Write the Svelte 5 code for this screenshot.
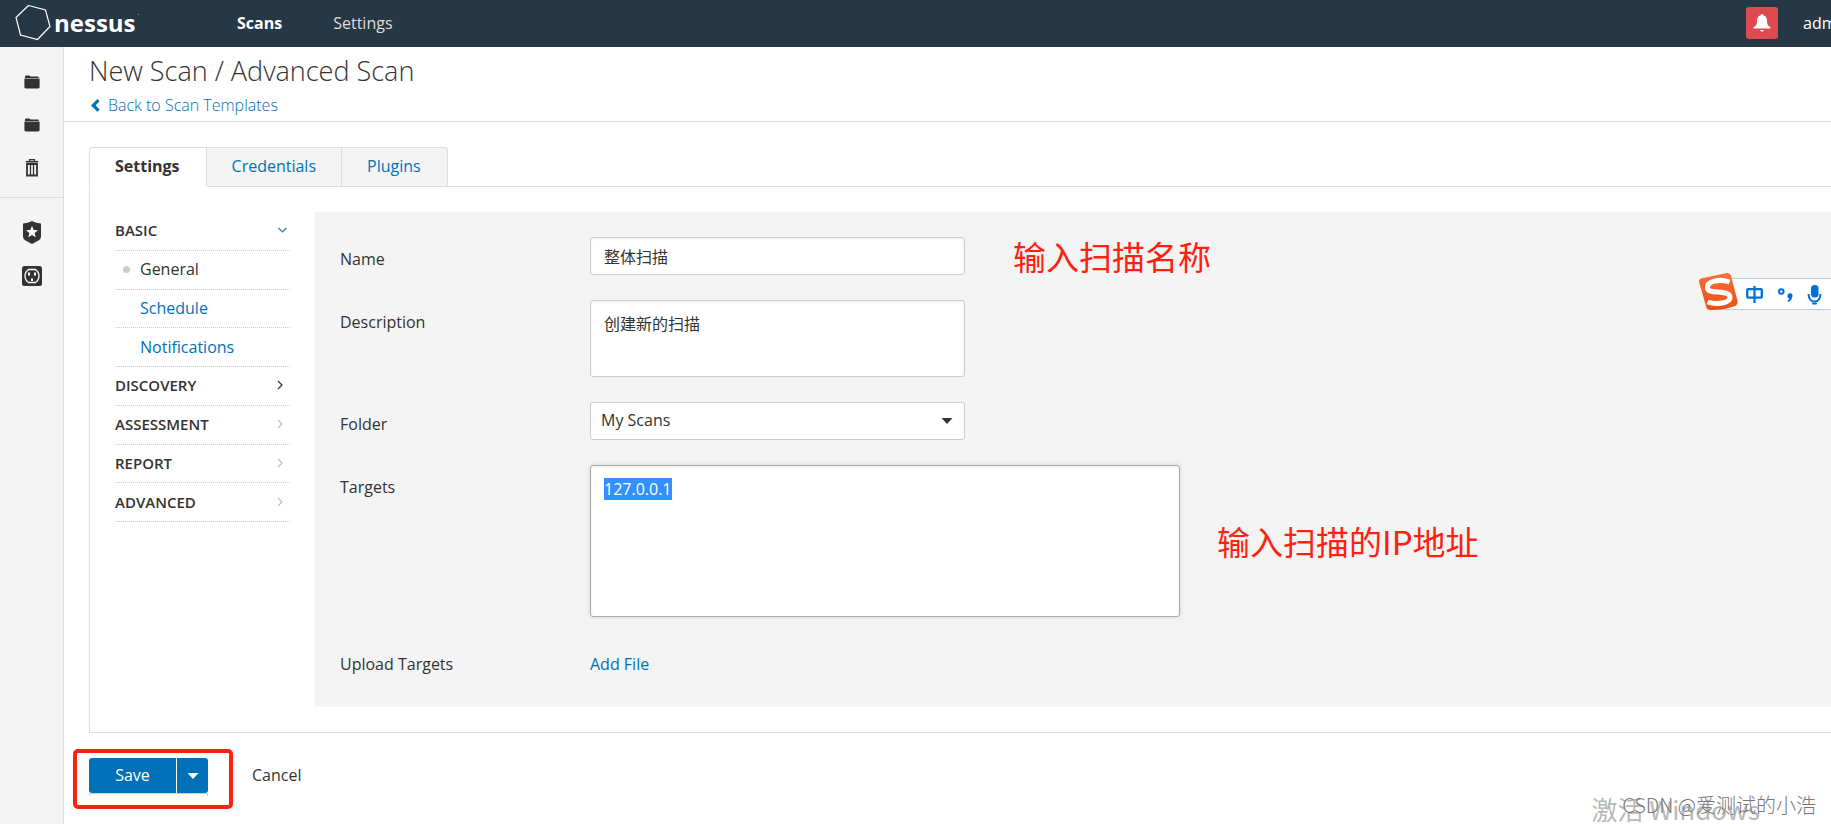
<script>
  import { onMount } from 'svelte';

  let name = $state('整体扫描');
  let description = $state('创建新的扫描');
  let folder = $state('My Scans');
  let targets = $state('127.0.0.1');
  let targetsBox;

  const tabs = ['Settings', 'Credentials', 'Plugins'];
  const menu = [
    { label: 'BASIC', kind: 'section', state: 'open' },
    { label: 'General', kind: 'item', state: 'current' },
    { label: 'Schedule', kind: 'item', state: '' },
    { label: 'Notifications', kind: 'item', state: '' },
    { label: 'DISCOVERY', kind: 'section', state: 'dark' },
    { label: 'ASSESSMENT', kind: 'section', state: '' },
    { label: 'REPORT', kind: 'section', state: '' },
    { label: 'ADVANCED', kind: 'section', state: '' }
  ];

  onMount(() => {
    targetsBox.focus();
    targetsBox.select();
  });
</script>

{#snippet folderIcon()}
  <svg width="16" height="14" viewBox="0 0 16 14">
    <path d="M1 3V1.6Q1 .6 2 .6H5.4L6.6 1.6H13.6Q14.8 1.6 14.8 3Z" fill="#333" />
    <path d="M.4 3.4H15.6V12Q15.6 13.4 14.2 13.4H1.8Q.4 13.4 .4 12Z" fill="#333" />
  </svg>
{/snippet}

<div class="app">
  <header class="topbar">
    <a class="logo" href="#home" aria-label="nessus">
      <svg width="38" height="38" viewBox="0 0 38 38">
        <path d="M14.5 1.5 31.5 6 36 22.5 23.5 35.5 6.5 31 2 13.5Z" fill="none" stroke="#fff" stroke-width="1.2" />
      </svg>
      <span>nessus</span>
      <i></i>
    </a>
    <nav>
      <a class="active" href="#scans">Scans</a>
      <a href="#settings">Settings</a>
    </nav>
    <div class="account">
      <button class="bell" aria-label="Notifications">
        <svg width="18" height="18" viewBox="0 0 18 18" fill="#fff">
          <path d="M9 0Q10.3 0 10.3 1.3C13 2 14 4.2 14 7C14 10.5 15 12.3 17.5 13.2V14.6H.5V13.2C3 12.3 4 10.5 4 7C4 4.2 5 2 7.7 1.3Q7.7 0 9 0Z" />
          <path d="M7 16H11Q10.5 17.6 9 17.6T7 16Z" />
        </svg>
      </button>
      <button class="user">admin</button>
    </div>
  </header>

  <div class="body">
    <aside>
      <div class="group">
        <button aria-label="My Scans">{@render folderIcon()}</button>
        <button aria-label="All Scans">{@render folderIcon()}</button>
        <button aria-label="Trash">
          <svg width="14" height="18" viewBox="0 0 14 18" fill="none" stroke="#333">
            <path d="M4.5 2.2V.7H9.5V2.2" stroke-width="1.2" />
            <path d="M.7 2.7H13.3" stroke-width="1.6" />
            <path d="M2 5V16.5H12V5Z" stroke-width="1.8" />
            <path d="M5.5 5V16M8.5 5V16" stroke-width="1.3" />
          </svg>
        </button>
      </div>
      <div class="group">
        <button aria-label="Policies">
          <svg width="18" height="23" viewBox="0 0 18 23">
            <path d="M9 0Q13 2.2 18 2.6V15.5Q18 18 15.5 19.5L9 23 2.5 19.5Q0 18 0 15.5V2.6Q5 2.2 9 0Z" fill="#333" />
            <path d="M9 4.8 10.6 8.9 15 9.2 11.6 12 12.7 16.3 9 13.9 5.3 16.3 6.4 12 3 9.2 7.4 8.9Z" fill="#fff" />
          </svg>
        </button>
        <button aria-label="Plugin Rules">
          <svg width="20" height="20" viewBox="0 0 20 20">
            <rect width="20" height="20" rx="2.5" fill="#333" />
            <path d="M6.5 3.5H13.5Q17 6 17 10T13.5 16.5H6.5Q3 14 3 10T6.5 3.5Z" fill="none" stroke="#fff" stroke-width="1.3" />
            <path d="M6 6.5H8V9.5H6ZM12 6.5H14V9.5H12ZM9 15V12.8Q10 11.6 11 12.8V15Z" fill="#fff" />
          </svg>
        </button>
      </div>
    </aside>

    <main>
      <div class="heading">
        <h1>New Scan / Advanced Scan</h1>
        <a href="#templates">
          <svg width="9" height="13" viewBox="0 0 9 13"><path d="M7.5 1.2 2.3 6.4 7.5 11.6" fill="none" stroke="#0071b9" stroke-width="3.2" /></svg>
          Back to Scan Templates
        </a>
      </div>

      <div class="tabs">
        {#each tabs as tab, i}
          <button class:selected={i === 0}>{tab}</button>
        {/each}
      </div>

      <section class="panel">
        <ul class="menu">
          {#each menu as row}
            <li>
              <a class="{row.kind} {row.state}" href="#{row.label.toLowerCase()}">
                {row.label}
                {#if row.kind === 'section'}
                  {#if row.state === 'open'}
                    <svg width="16" height="10" viewBox="0 0 16 10"><path d="M4.5 3 8.5 7 12.5 3" fill="none" stroke="#1b7fb5" stroke-width="1.2" /></svg>
                  {:else}
                    <svg width="20" height="10" viewBox="0 0 20 10"><path d="M8 1 12 5 8 9" fill="none" stroke={row.state === 'dark' ? '#333' : '#bbb'} stroke-width="1.2" /></svg>
                  {/if}
                {/if}
              </a>
            </li>
          {/each}
        </ul>

        <form class="fields" onsubmit={(e) => e.preventDefault()}>
          <div class="field">
            <label for="name">Name</label>
            <input id="name" type="text" bind:value={name} />
            <span class="note">输入扫描名称</span>
          </div>
          <div class="field">
            <label for="description">Description</label>
            <textarea id="description" bind:value={description}></textarea>
          </div>
          <div class="field">
            <label for="folder">Folder</label>
            <div class="select">
              <select id="folder" bind:value={folder}>
                <option>My Scans</option>
              </select>
              <svg width="12" height="6" viewBox="0 0 12 6"><path d="M.5 0H11.5L6 6Z" fill="#333" /></svg>
            </div>
          </div>
          <div class="field">
            <label for="targets">Targets</label>
            <textarea id="targets" class="wide" bind:value={targets} bind:this={targetsBox}></textarea>
            <span class="note middle">输入扫描的IP地址</span>
          </div>
          <div class="field last">
            <span class="label">Upload Targets</span>
            <a class="add" href="#add-file">Add File</a>
          </div>
        </form>
      </section>

      <div class="actions">
        <div class="marked">
          <div class="split">
            <button class="save">Save</button>
            <button class="more" aria-label="More save options">
              <svg width="12" height="6" viewBox="0 0 12 6"><path d="M.5 0H11.5L6 6Z" fill="#fff" /></svg>
            </button>
          </div>
          <div class="edge"></div>
        </div>
        <button class="cancel">Cancel</button>
      </div>
    </main>
  </div>

  <div class="ime">
    <svg width="133" height="42" viewBox="0 0 133 42">
      <defs>
        <linearGradient id="ime-fill" x1="0" y1="0" x2="0" y2="1">
          <stop offset="0" stop-color="#f9703c" />
          <stop offset="1" stop-color="#ee4e12" />
        </linearGradient>
      </defs>
      <rect x="20" y="6.5" width="130" height="31" fill="#fff" stroke="#b5cbe6" />
      <path d="M3 6.5 29 1Q32 .5 33 3.5L39.5 29Q40 32.5 37 34Q25 38.5 12 38Q9 38 8.3 35L1 10Q.5 7.5 3 6.5Z" fill="url(#ime-fill)" />
      <path d="M31.5 10C21 6.5 8.5 9 9.5 16.5C10.5 22.5 31 17.5 32 25C32.5 31.5 18 33 9.5 30" fill="none" stroke="#fff" stroke-width="5" />
      <g fill="none" stroke="#0071d8" stroke-width="2.3">
        <rect x="49.2" y="17.2" width="14.6" height="8.5" rx="1" />
        <path d="M56.5 14V31" />
        <circle cx="83.3" cy="19.5" r="2.3" stroke-width="2" />
        <path d="M110.5 22Q111 29.5 116.5 29.5T122.5 22" stroke-width="2" />
      </g>
      <g fill="#0071d8">
        <path d="M89.5 24.5A2.6 2.6 0 1 1 94 25.5Q93.5 29 90 30L89.5 28.5Q91 28 91.2 26.5Q89.5 26.5 89.5 24.5Z" />
        <rect x="113" y="13" width="7.5" height="12.5" rx="3.5" />
        <rect x="114" y="30.5" width="5" height="2" rx="1" />
      </g>
    </svg>
  </div>

  <span class="activate">激活 Windows</span>
  <span class="credit">CSDN @爱测试的小浩</span>
</div>

<style>
  :global(body) {
    background: #fff;
    overflow: hidden;
  }
  .app {
    position: relative;
    display: flex;
    flex-direction: column;
    min-height: 100vh;
    overflow: hidden;
    font: 16px/22px 'Open Sans', 'Noto Sans CJK SC', sans-serif;
    color: #333;
  }
  .app * {
    box-sizing: border-box;
  }
  a {
    color: #0071b9;
    text-decoration: none;
  }
  button {
    margin: 0;
    padding: 0;
    border: 0;
    background: none;
    color: inherit;
    font: inherit;
  }
  svg {
    display: block;
    flex: none;
  }

  .topbar {
    display: flex;
    align-items: center;
    height: 47px;
    padding: 0 0 2px 14px;
    background: #263746;
    color: #fff;
  }
  .logo {
    display: flex;
    align-items: center;
    width: 223px;
    gap: 2px;
    color: #fff;
    font-size: 24px;
    font-weight: 700;
    line-height: 40px;
  }
  .logo i {
    width: 1px;
    height: 1px;
    margin-bottom: 16px;
    background: #9aa5ae;
  }
  nav {
    display: flex;
    gap: 51px;
  }
  nav a {
    color: #ddd;
  }
  nav a.active {
    color: #fff;
    font-weight: 700;
  }
  .account {
    display: flex;
    align-items: center;
    gap: 25px;
    width: 85px;
    margin-left: auto;
  }
  .bell {
    display: flex;
    flex: none;
    align-items: center;
    justify-content: center;
    width: 32px;
    height: 32px;
    border-radius: 3px;
    background: #dd4b50;
  }

  .body {
    display: flex;
    flex: 1;
  }
  aside {
    flex: none;
    width: 64px;
    border-right: 1px solid #ddd;
    background: #f4f4f4;
  }
  .group {
    padding: 13px 0 8px;
  }
  .group + .group {
    border-top: 1px solid #ddd;
  }
  .group button {
    display: flex;
    align-items: center;
    justify-content: center;
    width: 100%;
    height: 43px;
  }
  main {
    flex: 1;
    min-width: 0;
  }
  .heading {
    height: 75px;
    padding-left: 25px;
    border-bottom: 1px solid #ddd;
  }
  h1 {
    margin: 0;
    font-size: 27px;
    font-weight: 300;
    line-height: 47px;
  }
  .heading a {
    display: flex;
    align-items: center;
    gap: 8px;
    padding-left: 2px;
    font-weight: 300;
  }

  .tabs {
    display: flex;
    position: relative;
    margin: 25px 0 -1px 25px;
  }
  .tabs button {
    height: 40px;
    padding: 0 25px 2px;
    border: 1px solid #ddd;
    border-left-width: 0;
    background: #f4f4f4;
    color: #0071b9;
  }
  .tabs button.selected {
    padding-right: 26px;
    border-left-width: 1px;
    border-bottom-color: #fff;
    border-radius: 3px 0 0 0;
    background: #fff;
    color: #333;
    font-weight: 700;
  }
  .tabs button:last-child {
    padding-right: 26px;
    border-radius: 0 3px 0 0;
  }
  .panel {
    display: flex;
    gap: 25px;
    margin-left: 25px;
    padding: 25px 0 25px 25px;
    border: 1px solid #ddd;
    border-right: 0;
  }
  .menu {
    display: grid;
    flex: none;
    grid-template-rows: repeat(8, 1fr);
    width: 175px;
    height: 310px;
    margin: 0;
    padding: 0;
    list-style: none;
  }
  .menu li {
    display: flex;
    border-bottom: 1px dotted #ccc;
  }
  .menu a {
    display: flex;
    flex: 1;
    align-items: center;
    justify-content: space-between;
    padding-bottom: 1px;
  }
  .section {
    color: #333;
    font-size: 15px;
    font-weight: 600;
  }
  .item {
    padding-left: 25px;
  }
  .menu .item.current {
    justify-content: flex-start;
    gap: 10px;
    padding-left: 8px;
    color: #333;
  }
  .item.current::before {
    content: '';
    width: 7px;
    height: 7px;
    border-radius: 50%;
    background: #ccc;
  }

  .fields {
    display: flex;
    flex: 1;
    flex-direction: column;
    gap: 25px;
    min-width: 0;
    padding: 25px;
    background: #f4f4f4;
  }
  .field {
    display: flex;
    align-items: flex-start;
  }
  .field.last {
    min-height: 40px;
  }
  label,
  .label {
    flex: none;
    width: 250px;
    padding-top: 11px;
  }
  .add {
    padding-top: 11px;
  }
  input,
  textarea,
  select {
    display: block;
    width: 375px;
    height: 38px;
    margin: 0;
    padding: 0 13px 1px;
    border: 1px solid #ccc;
    border-radius: 3px;
    outline: 0;
    background: #fff;
    box-shadow: inset 0 1px 3px #0001;
    color: #333;
    font: inherit;
  }
  textarea {
    height: 77px;
    padding: 12px 13px;
    resize: none;
  }
  textarea.wide {
    width: 590px;
    height: 152px;
    border-color: #aaa;
    box-shadow: inset 0 1px 3px #0001, 0 0 5px #0002;
  }
  textarea::selection {
    background: #3390ff;
    color: #fff;
  }
  .select {
    position: relative;
  }
  select {
    appearance: none;
    padding: 0 10px 2px;
    box-shadow: none;
  }
  .select svg {
    position: absolute;
    top: 16px;
    right: 12px;
    pointer-events: none;
  }
  .note {
    margin-left: 48px;
    color: #ff2010;
    font-family: 'Noto Sans CJK SC', sans-serif;
    font-size: 33px;
    line-height: 38px;
    white-space: nowrap;
  }
  .note.middle {
    align-self: center;
    margin-left: 37px;
  }

  .actions {
    display: flex;
    align-items: center;
    gap: 19px;
    padding: 16px 9px;
  }
  .marked {
    width: 160px;
    height: 60px;
    padding: 5px 12px;
    border: 4px solid #ff2010;
    border-radius: 5px;
  }
  .split {
    display: flex;
    gap: 1px;
    height: 35px;
    width: 119px;
    color: #fff;
  }
  .edge {
    width: 119px;
    height: 3px;
    border: 1px solid #ccc;
    border-bottom: 0;
  }
  .save {
    flex: 1;
    padding-bottom: 2px;
    border-radius: 3px 0 0 3px;
    background: #0071b9;
  }
  .more {
    display: flex;
    align-items: center;
    justify-content: center;
    width: 31px;
    border-radius: 0 3px 3px 0;
    background: #0071b9;
  }
  .cancel {
    margin-bottom: 8px;
  }

  .ime {
    position: absolute;
    top: 272px;
    right: 0;
  }
  .activate,
  .credit {
    position: absolute;
    white-space: nowrap;
    font-family: 'Noto Sans CJK SC', sans-serif;
  }
  .activate {
    right: 71px;
    bottom: 2px;
    color: #b8b8b8;
    font-size: 26px;
    line-height: 28px;
  }
  .credit {
    right: 15px;
    bottom: 7px;
    color: #777;
    font-size: 20px;
    font-weight: 300;
    line-height: 26px;
  }
</style>
